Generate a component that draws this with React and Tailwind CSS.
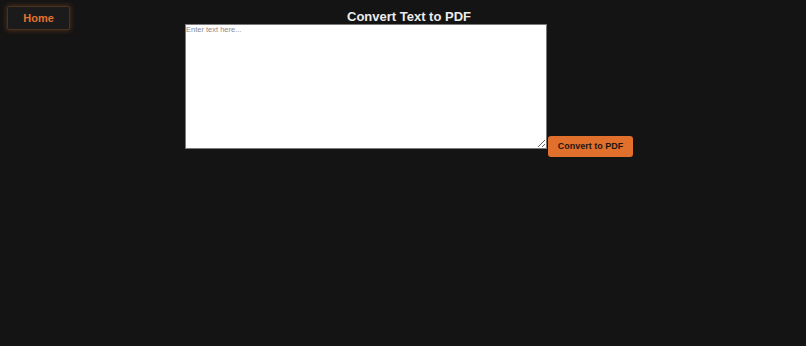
import React, { useState } from 'react';

export default function App() {
  const [text, setText] = useState('');

  return (
    <div className="relative h-[346px] w-full overflow-hidden bg-[#141414] font-['Liberation_Sans',Arial,sans-serif]">
      {/* Home button */}
      <button className="absolute left-[7px] top-[6px] h-[24px] w-[63px] rounded-[2px] border border-[#4a3220] bg-[#1b1b1b] text-[11px] font-bold text-[#e2732f] shadow-[0_0_5px_1px_rgba(226,115,47,0.25)]">
        Home
      </button>

      <div className="flex flex-col items-center pl-3">
        <h1 className="mt-[9px] text-[13px] font-bold leading-[15px] text-[#ececec]">
          Convert Text to PDF
        </h1>
        <div className="flex items-start">
          <textarea
            value={text}
            onChange={(e) => setText(e.target.value)}
            placeholder="Enter text here..."
            className="block h-[125px] w-[362px] border border-[#7a7a7a] bg-white p-0 text-[7.5px] leading-[9px] text-black placeholder:text-[#8a8a8a]"
          />
          <button className="ml-px mt-[112px] h-[21px] w-[85px] rounded-[3px] bg-[#e2702d] text-[9px] font-bold text-[#1e1610]">
            Convert to PDF
          </button>
        </div>
      </div>
    </div>
  );
}
